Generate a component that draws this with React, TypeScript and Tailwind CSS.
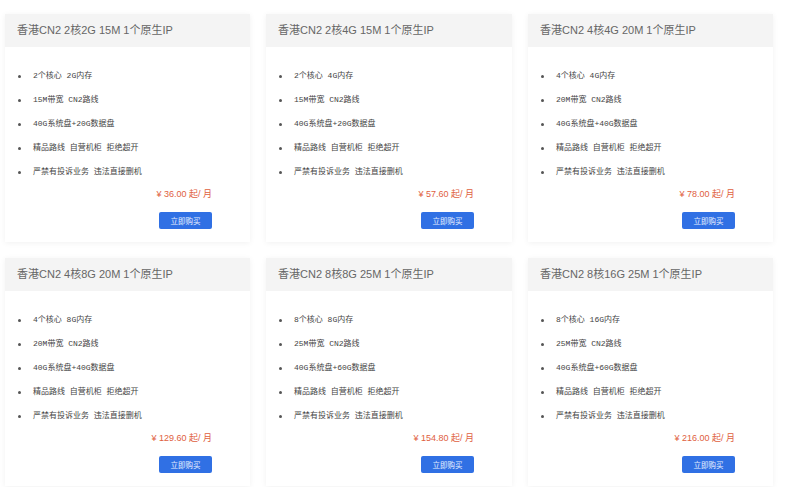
import React from 'react'

interface Plan {
  title: string
  cpu: string
  ram: string
  bw: string
  disk: string
  price: string
}

const plans: Plan[] = [
  { title: '香港CN2 2核2G 15M 1个原生IP', cpu: '2', ram: '2G', bw: '15M', disk: '40G系统盘+20G数据盘', price: '36.00' },
  { title: '香港CN2 2核4G 15M 1个原生IP', cpu: '2', ram: '4G', bw: '15M', disk: '40G系统盘+20G数据盘', price: '57.60' },
  { title: '香港CN2 4核4G 20M 1个原生IP', cpu: '4', ram: '4G', bw: '20M', disk: '40G系统盘+40G数据盘', price: '78.00' },
  { title: '香港CN2 4核8G 20M 1个原生IP', cpu: '4', ram: '8G', bw: '20M', disk: '40G系统盘+40G数据盘', price: '129.60' },
  { title: '香港CN2 8核8G 25M 1个原生IP', cpu: '8', ram: '8G', bw: '25M', disk: '40G系统盘+60G数据盘', price: '154.80' },
  { title: '香港CN2 8核16G 25M 1个原生IP', cpu: '8', ram: '16G', bw: '25M', disk: '40G系统盘+60G数据盘', price: '216.00' },
]

const itemFont = "font-['Liberation_Mono','Noto_Sans_CJK_SC',monospace]"

function PlanCard({ plan }: { plan: Plan }) {
  const items = [
    `${plan.cpu}个核心\u00a0${plan.ram}内存`,
    `${plan.bw}带宽\u00a0CN2路线`,
    plan.disk,
    '精品路线\u00a0自营机柜\u00a0拒绝超开',
    '严禁有投诉业务\u00a0违法直接删机',
  ]

  return (
    <div className="bg-white shadow-[0_1px_6px_rgba(0,0,0,0.06)]">
      {/* Header */}
      <div className="h-[33px] bg-[#f4f4f4] pl-[12px] flex items-center">
        <span className="text-[11px] text-[#666] font-['Liberation_Sans','Noto_Sans_CJK_SC',sans-serif]">
          {plan.title}
        </span>
      </div>

      {/* Body */}
      <div className="pt-[17px] pb-[13px] pr-[38px]">
        <ul>
          {items.map(item => (
            <li key={item} className="h-[24px] flex items-center">
              <span className="w-[3px] h-[3px] rounded-full bg-[#555] ml-[13px] mr-[12px]"></span>
              <span className={`text-[8px] text-[#444] ${itemFont}`}>{item}</span>
            </li>
          ))}
        </ul>
        <div className="flex flex-col items-end">
          <div className="mt-[4px] h-[14px] flex items-center text-[9px] text-[#e0603e] font-['Liberation_Sans','Noto_Sans_CJK_SC',sans-serif]">
            ¥ {plan.price} 起/ 月
          </div>
          <button className="mt-[10px] w-[53px] h-[17px] rounded-[2px] bg-[#3070e4] text-[#e8f0ff] text-[7.5px] flex items-center justify-center font-['Noto_Sans_CJK_SC',sans-serif]">
            立即购买
          </button>
        </div>
      </div>
    </div>
  )
}

export default function App() {
  return (
    <div className="w-[790px] h-[487px] overflow-hidden bg-white">
      <div className="pl-[5px] pt-[14px] grid grid-cols-[245px_246px_245px] gap-x-[16px] gap-y-[16px]">
        {plans.map(p => (
          <PlanCard key={p.title} plan={p} />
        ))}
      </div>
    </div>
  )
}
